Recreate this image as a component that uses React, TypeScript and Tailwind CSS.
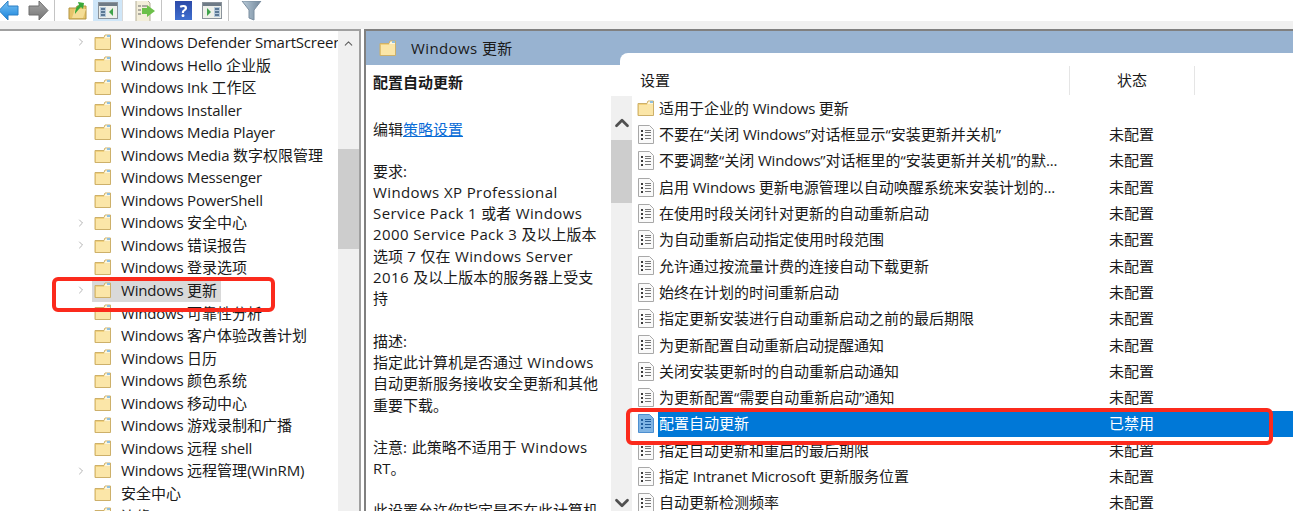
import { ChevronRight, ChevronUp, ChevronDown } from 'lucide-react';

const treeItems = [
  { name: 'Windows Defender SmartScreen', arrow: true },
  { name: 'Windows Hello 企业版' },
  { name: 'Windows Ink 工作区' },
  { name: 'Windows Installer' },
  { name: 'Windows Media Player' },
  { name: 'Windows Media 数字权限管理' },
  { name: 'Windows Messenger' },
  { name: 'Windows PowerShell' },
  { name: 'Windows 安全中心', arrow: true },
  { name: 'Windows 错误报告', arrow: true },
  { name: 'Windows 登录选项' },
  { name: 'Windows 更新', arrow: true, selected: true },
  { name: 'Windows 可靠性分析' },
  { name: 'Windows 客户体验改善计划' },
  { name: 'Windows 日历' },
  { name: 'Windows 颜色系统' },
  { name: 'Windows 移动中心' },
  { name: 'Windows 游戏录制和广播' },
  { name: 'Windows 远程 shell' },
  { name: 'Windows 远程管理(WinRM)', arrow: true },
  { name: '安全中心' },
  { name: '边缘 UI' },
];

const policies = [
  { name: '不要在“关闭 Windows”对话框显示“安装更新并关机”', state: '未配置' },
  { name: '不要调整“关闭 Windows”对话框里的“安装更新并关机”的默...', state: '未配置' },
  { name: '启用 Windows 更新电源管理以自动唤醒系统来安装计划的...', state: '未配置' },
  { name: '在使用时段关闭针对更新的自动重新启动', state: '未配置' },
  { name: '为自动重新启动指定使用时段范围', state: '未配置' },
  { name: '允许通过按流量计费的连接自动下载更新', state: '未配置' },
  { name: '始终在计划的时间重新启动', state: '未配置' },
  { name: '指定更新安装进行自动重新启动之前的最后期限', state: '未配置' },
  { name: '为更新配置自动重新启动提醒通知', state: '未配置' },
  { name: '关闭安装更新时的自动重新启动通知', state: '未配置' },
  { name: '为更新配置“需要自动重新启动”通知', state: '未配置' },
  { name: '配置自动更新', state: '已禁用', selected: true },
  { name: '指定自动更新和重启的最后期限', state: '未配置' },
  { name: '指定 Intranet Microsoft 更新服务位置', state: '未配置' },
  { name: '自动更新检测频率', state: '未配置' },
];

// latin runs are tighter than the CJK ones in the screenshot
const Txt = ({ text, latin = 'tracking-[-0.2px]' }: { text: string; latin?: string }) => (
  <>
    {text.split(/([\x20-\x7e]+)/).map((part, i) =>
      i % 2 === 1 ? (
        <span key={i} className={latin}>
          {part}
        </span>
      ) : (
        part
      )
    )}
  </>
);

const Folder = () => (
  <svg width="18" height="17" viewBox="0 0 18 17" className="shrink-0">
    <path d="M1 3.500h9l1-2.500h5.500v14.500H1z" fill="#f3d27c" stroke="#cdb06a" />
    <path d="M11.500 1.500h4.500v3h-6z" fill="#fdf6dc" />
    <rect x="13" y="1" width="3" height="2" fill="#8fc0e0" />
    <rect x="2" y="5" width="14" height="10" fill="#fbe6a8" />
  </svg>
);

const PolicyIcon = ({ active }: { active?: boolean }) => (
  <svg width="16" height="19" viewBox="0 0 16 19" className="shrink-0">
    <path d="M.5.500h11l4 4v14H.5z" fill={active ? '#7fb4e4' : '#fafafa'} stroke={active ? '#4d8fd0' : '#a8a8a8'} />
    <g fill={active ? '#1d5a9c' : '#3a3a3a'}>
      <rect x="3" y="5" width="2" height="2" />
      <rect x="3" y="9" width="2" height="2" />
      <rect x="3" y="13" width="2" height="2" />
    </g>
    <g fill={active ? '#1d5a9c' : '#777'}>
      <rect x="7" y="5" width="6" height="1" />
      <rect x="7" y="7" width="6" height="1" />
      <rect x="7" y="10" width="6" height="1" />
      <rect x="7" y="13" width="6" height="1" />
    </g>
  </svg>
);

const PaneIcon = ({ side }: { side: 'left' | 'right' }) => (
  <svg width="20" height="17" viewBox="0 0 20 17" className="blur-[0.4px]">
    <rect x=".5" y=".5" width="19" height="16" fill="#eef0ea" stroke="#8b939b" />
    <rect x="1" y="1" width="18" height="3" fill="#6f7b86" />
    {side === 'left' ? (
      <>
        <rect x="2" y="5" width="6" height="10" fill="#b7cadb" />
        <path d="M3 7h4M3 10h4M3 13h4" stroke="#3f5f7f" strokeWidth="1.5" />
        <path d="M15 6v8l-4-4z" fill="#3fa34a" />
      </>
    ) : (
      <>
        <rect x="12" y="5" width="6" height="10" fill="#b7cadb" />
        <path d="M13 7h4M13 10h4M13 13h4" stroke="#3f5f7f" strokeWidth="1.5" />
        <path d="M5 6v8l4-4z" fill="#3fa34a" />
      </>
    )}
  </svg>
);

const Toolbar = () => (
  <div className="flex h-[21px] items-center overflow-hidden bg-white">
    <svg width="21" height="20" viewBox="0 0 21 20" className="-ml-[2px] blur-[0.4px]">
      <defs>
        <linearGradient id="backBlue" x1="0" y1="0" x2="0" y2="1">
          <stop offset="0" stopColor="#7cc4f4" />
          <stop offset="1" stopColor="#1682dc" />
        </linearGradient>
      </defs>
      <path d="M10 0 1 9.500 10 19v-5h10V5H10z" fill="url(#backBlue)" stroke="#2a7fc4" />
    </svg>
    <svg width="21" height="20" viewBox="0 0 21 20" className="ml-[9px] blur-[0.4px]">
      <defs>
        <linearGradient id="fwdGray" x1="0" y1="0" x2="0" y2="1">
          <stop offset="0" stopColor="#a8a8a8" />
          <stop offset="1" stopColor="#747474" />
        </linearGradient>
      </defs>
      <path d="M11 0l9 9.500L11 19v-5H1V5h10z" fill="url(#fwdGray)" stroke="#6e6e6e" />
    </svg>
    <div className="ml-[5px] mr-[13px] h-[21px] w-px bg-[#c4c4c4]" />
    <svg width="19" height="19" viewBox="0 0 19 19" className="blur-[0.4px]">
      <path d="M1 7h7l1-2h9v13H1z" fill="#e6c46a" stroke="#b39443" />
      <path d="M4 17 7 8h11l-3 9z" fill="#f4dd96" />
      <path d="M7 13c0-5 2-8 4-9l-1-3 6 1-1 6-2-2c-2 2-4 4-6 7z" fill="#3aa83a" />
    </svg>
    <div className="ml-[6px] flex h-[21px] w-[29px] items-center justify-center bg-[#cfe6f8]">
      <PaneIcon side="left" />
    </div>
    <div className="h-[21px] w-px bg-[#d8d8d8]" />
    <svg width="21" height="20" viewBox="0 0 21 20" className="ml-[12px] blur-[0.4px]">
      <path d="M1 -1h11l3 3v19H1z" fill="#f3eeda" stroke="#b3ad97" />
      <path d="M3 5h3M3 9h3M3 13h3M7 5h5" stroke="#666" />
      <path d="M12 4l8 6-8 6v-3H7V7h5z" fill="#6cc04a" />
    </svg>
    <div className="ml-[5px] mr-[13px] h-[21px] w-px bg-[#c4c4c4]" />
    <div className="flex h-[19px] w-[17px] items-center justify-center bg-gradient-to-b from-[#2c4aa8] to-[#3f6fd0] text-[16px] font-bold leading-none text-white blur-[0.3px]">?</div>
    <div className="ml-[10px]">
      <PaneIcon side="right" />
    </div>
    <div className="ml-[6px] mr-[12px] h-[21px] w-px bg-[#c4c4c4]" />
    <svg width="21" height="20" viewBox="0 0 21 20" className="blur-[0.4px]">
      <defs>
        <linearGradient id="funnel" x1="0" y1="0" x2="1" y2="0">
          <stop offset="0" stopColor="#b8cad8" />
          <stop offset="1" stopColor="#74899c" />
        </linearGradient>
      </defs>
      <path d="M1 0h19l-7 9v10l-5-2V9z" fill="url(#funnel)" stroke="#7b8ea0" />
    </svg>
  </div>
);

export default function App() {
  return (
    <div className="flex h-[511px] w-[1293px] flex-col overflow-hidden bg-white font-['Open_Sans','Noto_Sans_CJK_SC',sans-serif] text-[15px] text-[#1a1a1a]">
      <Toolbar />
      <div className="h-[8px] bg-[#f0f0f0]" />
      <div className="relative flex min-h-0 flex-1">
        {/* tree */}
        <div className="flex h-full w-[361px] shrink-0 border-t-2 border-r-2 border-[#a0a0a0]">
          <div className="min-w-0 flex-1 overflow-hidden">
            {treeItems.map((item) => (
              <div key={item.name} className="flex h-[22.55px] items-center">
                <div className="flex w-[92px] shrink-0 justify-start pl-[75px]">
                  {item.arrow && <ChevronRight size={12} strokeWidth={1.6} className="text-[#a0a0a0]" />}
                </div>
                <div className={`flex h-[22.55px] items-center pl-[2px] pr-[4px] ${item.selected ? 'bg-[#d9d9d9]' : ''}`}>
                  <Folder />
                  <span className="ml-[9px] whitespace-nowrap">
                    <Txt text={item.name} />
                  </span>
                </div>
              </div>
            ))}
          </div>
          <div className="flex w-[21px] shrink-0 flex-col items-center bg-[#f0f0f0] pt-[6px]">
            <ChevronUp size={13} strokeWidth={2} className="text-[#606060]" />
            <div className="mt-[99px] h-[100px] w-full bg-[#cdcdcd]" />
          </div>
        </div>

        <div className="w-[3px] shrink-0" />

        {/* right pane */}
        <div className="flex min-w-0 flex-1 flex-col border-t-2 border-l-2 border-[#808080]">
          <div className="flex h-[34px] shrink-0 items-center bg-[#98b3d1] pl-[13px]">
            <Folder />
            <span className="ml-[14px] tracking-[0.4px]">Windows 更新</span>
          </div>
          <div className="flex min-h-0 flex-1">
            <div className="w-[245px] shrink-0 overflow-hidden pl-[7px] pt-[7px] leading-[21.3px]">
              <p className="font-bold">配置自动更新</p>
              <p className="mt-[26px]">
                编辑<span className="text-[#0a6cd6] underline">策略设置</span>
              </p>
              <p className="mt-[20px]">要求:</p>
              <p><Txt text="Windows XP Professional" latin="tracking-[0.4px]" /></p>
              <p><Txt text="Service Pack 1 或者 Windows" latin="tracking-[0.4px]" /></p>
              <p><Txt text="2000 Service Pack 3 及以上版本" latin="tracking-[0.4px]" /></p>
              <p><Txt text="选项 7 仅在 Windows Server" latin="tracking-[0.4px]" /></p>
              <p><Txt text="2016 及以上版本的服务器上受支" latin="tracking-[0.4px]" /></p>
              <p>持</p>
              <p className="mt-[21px]">描述:</p>
              <p><Txt text="指定此计算机是否通过 Windows" latin="tracking-[0.4px]" /></p>
              <p>自动更新服务接收安全更新和其他</p>
              <p>重要下载。</p>
              <p className="mt-[21px]"><Txt text="注意: 此策略不适用于 Windows" latin="tracking-[0.4px]" /></p>
              <p>RT。</p>
              <p className="mt-[21px]">此设置允许你指定是否在此计算机</p>
            </div>

            <div className="relative min-w-0 flex-1">
              {/* white tab that cuts up into the blue header */}
              <div className="absolute -top-[12px] left-[9px] right-0 h-[12px] rounded-tl-[8px] bg-white" />
              <div className="flex h-full">
                <div className="mt-[31px] flex w-[21px] shrink-0 flex-col items-center bg-[#f0f0f0]">
                  <ChevronUp size={22} strokeWidth={3} className="mt-[16px] text-[#505050]" />
                  <div className="mt-[6px] h-[63px] w-full bg-[#cdcdcd]" />
                  <div className="flex-1" />
                  <ChevronDown size={22} strokeWidth={3} className="-mb-[3px] text-[#505050]" />
                </div>
                <div className="min-w-0 flex-1 overflow-hidden">
                  <div className="flex h-[30px] items-center">
                    <div className="w-[437px] pl-[8px]">设置</div>
                    <div className="h-[29px] w-px bg-[#e5e5e5]" />
                    <div className="w-[124px] text-center">状态</div>
                    <div className="h-[29px] w-px bg-[#e5e5e5]" />
                  </div>
                  <div className="flex h-[26.3px] items-center pl-[5px]">
                    <Folder />
                    <span className="ml-[4px] whitespace-nowrap">
                      <Txt text="适用于企业的 Windows 更新" />
                    </span>
                  </div>
                  {policies.map((p) => (
                    <div key={p.name} className="flex h-[26.3px] items-center pl-[6px]">
                      <PolicyIcon active={p.selected} />
                      <div className={`ml-[4px] flex h-[26.3px] flex-1 items-center ${p.selected ? 'bg-[#0078d7] text-white' : ''}`}>
                        <span className="w-[451px] shrink-0 overflow-hidden whitespace-nowrap pl-[1px]">
                          <Txt text={p.name} />
                        </span>
                        <span>{p.state}</span>
                      </div>
                    </div>
                  ))}
                </div>
              </div>
            </div>
          </div>
        </div>

        {/* annotation boxes */}
        <div className="absolute left-[52px] top-[248px] h-[35px] w-[223px] rounded-[6px] border-4 border-[#fb2a1c]" />
        <div className="absolute left-[626px] top-[379px] h-[37px] w-[647px] rounded-[6px] border-4 border-[#fb2a1c]" />
      </div>
    </div>
  );
}
